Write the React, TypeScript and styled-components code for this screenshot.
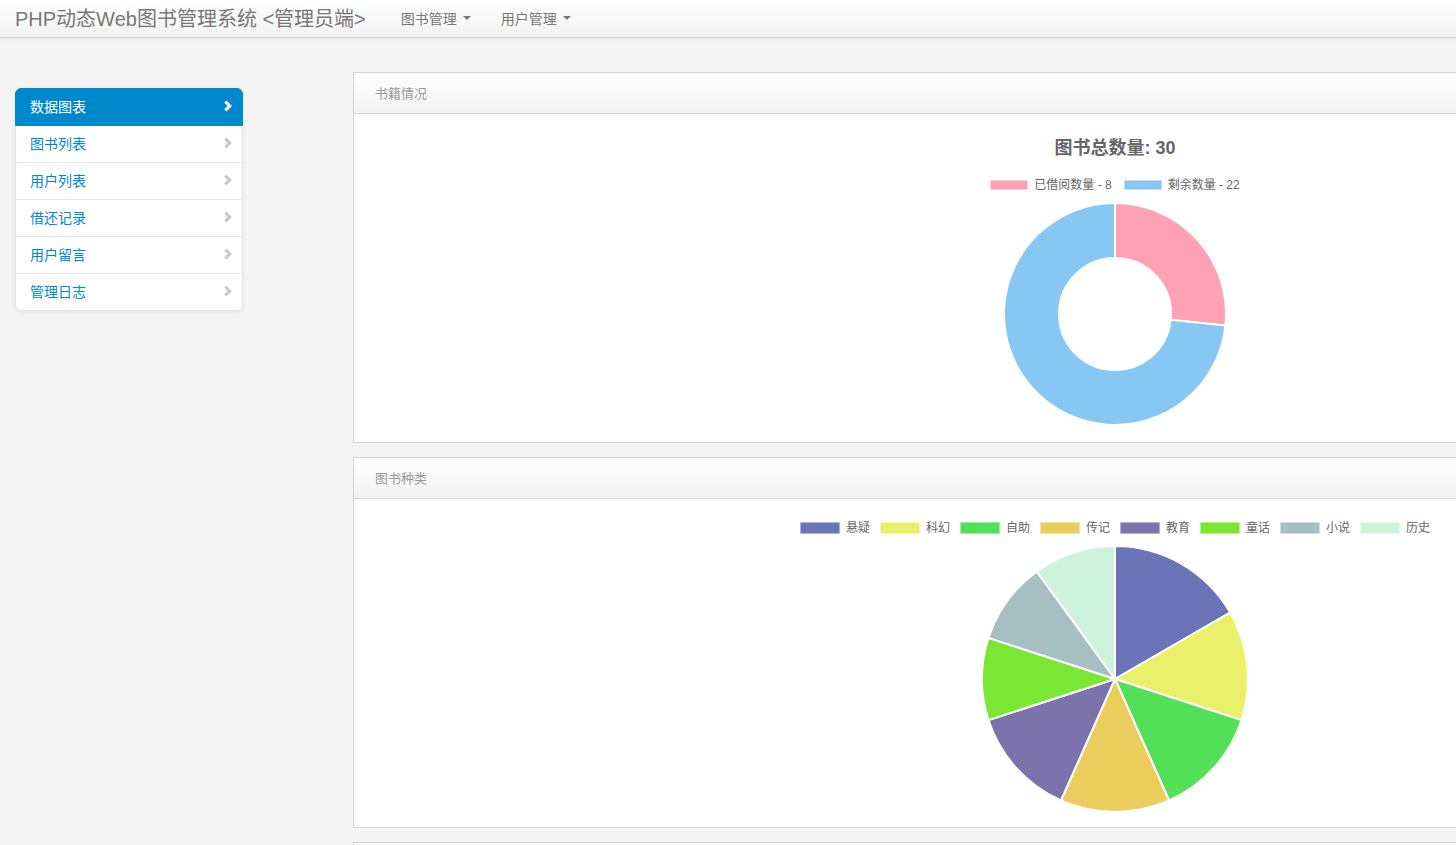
import React from 'react';
import styled, { createGlobalStyle } from 'styled-components';

const GlobalStyle = createGlobalStyle`
  html, body {
    margin: 0;
    padding: 0;
    overflow: hidden;
    background: #f4f4f4;
    font-family: "Liberation Sans", "Noto Sans CJK SC", Arial, sans-serif;
    font-size: 14px;
    color: #333;
  }
`;

const Navbar = styled.div`
  height: 35px;
  padding: 0 0 2px 15px;
  display: flex;
  align-items: center;
  background: linear-gradient(#ffffff, #f2f2f2);
  border-bottom: 1px solid #d4d4d4;
  box-shadow: 0 1px 4px rgba(0, 0, 0, 0.065);
`;

const Brand = styled.div`
  font-size: 20px;
  color: #777;
  margin-right: 20px;
  white-space: nowrap;
`;

const NavLink = styled.div`
  display: flex;
  align-items: center;
  padding: 0 15px;
  font-size: 14px;
  color: #777;
`;

const Caret = styled.span`
  display: inline-block;
  width: 0;
  height: 0;
  margin-left: 6px;
  border-top: 4px solid #777;
  border-left: 4px solid transparent;
  border-right: 4px solid transparent;
`;

const Layout = styled.div`
  display: flex;
  align-items: flex-start;
  padding-left: 15px;
`;

const SideNav = styled.ul`
  list-style: none;
  margin: 50px 0 0;
  padding: 0;
  width: 228px;
  flex-shrink: 0;
  background: #fff;
  border-radius: 6px;
  box-shadow: 0 1px 4px rgba(0, 0, 0, 0.065);
`;

const SideItem = styled.li<{ $active?: boolean }>`
  display: flex;
  align-items: center;
  justify-content: space-between;
  height: 34px;
  padding: 0 9px 2px 14px;
  margin-bottom: -1px;
  border: 1px solid ${(p) => (p.$active ? '#0088cc' : '#e5e5e5')};
  background: ${(p) => (p.$active ? '#0088cc' : '#fff')};
  color: ${(p) => (p.$active ? '#fff' : '#0088cc')};
  font-size: 14px;
  position: relative;
  z-index: ${(p) => (p.$active ? 2 : 1)};

  &:first-child {
    border-radius: 6px 6px 0 0;
  }
  &:last-child {
    border-radius: 0 0 6px 6px;
    margin-bottom: 0;
  }
`;

const Main = styled.div`
  margin: 34px 0 0 110px;
  width: 1524px;
  flex-shrink: 0;
  display: flex;
  flex-direction: column;
  gap: 14px;
`;

const Panel = styled.div`
  background: #fff;
  border: 1px solid #d4d4d4;
`;

const PanelHeader = styled.div`
  height: 38px;
  padding: 0 0 2px 21px;
  display: flex;
  align-items: center;
  font-size: 13px;
  color: #999;
  background: linear-gradient(#ffffff, #f2f2f2);
  border-bottom: 1px solid #d4d4d4;
`;

const PanelBody = styled.div<{ $top: number }>`
  height: 328px;
  box-sizing: border-box;
  padding-top: ${(p) => p.$top}px;
  display: flex;
  flex-direction: column;
  align-items: center;
`;

const ChartTitle = styled.div`
  font-size: 18px;
  line-height: 22px;
  font-weight: bold;
  color: #666;
`;

const Legend = styled.div<{ $gap: number; $mt: number }>`
  display: flex;
  gap: ${(p) => p.$gap}px;
  margin-top: ${(p) => p.$mt}px;
  height: 14px;
`;

const LegendItem = styled.div`
  display: flex;
  align-items: center;
  font-size: 12px;
  line-height: 14px;
  color: #666;
  white-space: nowrap;
`;

const Swatch = styled.span<{ $color: string; $w: number; $h: number }>`
  display: inline-block;
  box-sizing: border-box;
  width: ${(p) => p.$w}px;
  height: ${(p) => p.$h}px;
  margin-right: 6px;
  background: ${(p) => p.$color};
  border: 1px solid rgba(255, 255, 255, 0.45);
`;

const ChartSvg = styled.svg<{ $mt: number }>`
  display: block;
  margin-top: ${(p) => p.$mt}px;
`;

const Chevron = ({ color }: { color: string }) => (
  <svg width="10" height="12" viewBox="0 0 10 12">
    <path d="M2.3 1.6 L6.8 6 L2.3 10.4" fill="none" stroke={color} strokeWidth="3" />
  </svg>
);

const arcPath = (cx: number, cy: number, r: number, ri: number, a0: number, a1: number) => {
  const p = (rad: number, a: number) => `${cx + rad * Math.cos(a)} ${cy + rad * Math.sin(a)}`;
  const large = a1 - a0 > Math.PI ? 1 : 0;
  if (ri === 0) {
    return `M${cx} ${cy} L${p(r, a0)} A${r} ${r} 0 ${large} 1 ${p(r, a1)} Z`;
  }
  return `M${p(r, a0)} A${r} ${r} 0 ${large} 1 ${p(r, a1)} L${p(ri, a1)} A${ri} ${ri} 0 ${large} 0 ${p(ri, a0)} Z`;
};

type Slice = { label: string; value: number; color: string };

const PieChart = ({ data, r, ri, mt }: { data: Slice[]; r: number; ri: number; mt: number }) => {
  const total = data.reduce((s, d) => s + d.value, 0);
  const size = r * 2 + 4;
  const c = size / 2;
  let a = -Math.PI / 2;
  return (
    <ChartSvg $mt={mt} width={size} height={size} viewBox={`0 0 ${size} ${size}`}>
      {data.map((d) => {
        const a0 = a;
        const a1 = a + (d.value / total) * Math.PI * 2;
        a = a1;
        return <path key={d.label} d={arcPath(c, c, r, ri, a0, a1)} fill={d.color} stroke="#fff" strokeWidth="2" />;
      })}
    </ChartSvg>
  );
};

const books: Slice[] = [
  { label: '已借阅数量 - 8', value: 8, color: '#ffa1b5' },
  { label: '剩余数量 - 22', value: 22, color: '#87c7f3' },
];

const kinds: Slice[] = [
  { label: '悬疑', value: 5, color: '#6b74b6' },
  { label: '科幻', value: 4, color: '#ebf06a' },
  { label: '自助', value: 4, color: '#52e058' },
  { label: '传记', value: 4, color: '#eacd5c' },
  { label: '教育', value: 4, color: '#7c73ad' },
  { label: '童话', value: 3, color: '#7ae833' },
  { label: '小说', value: 3, color: '#a6bfc3' },
  { label: '历史', value: 3, color: '#cdf3dc' },
];

const menu = ['数据图表', '图书列表', '用户列表', '借还记录', '用户留言', '管理日志'];

export default function App() {
  return (
    <>
      <GlobalStyle />
      <Navbar>
        <Brand>PHP动态Web图书管理系统 &lt;管理员端&gt;</Brand>
        <NavLink>
          图书管理
          <Caret />
        </NavLink>
        <NavLink>
          用户管理
          <Caret />
        </NavLink>
      </Navbar>
      <Layout>
        <SideNav>
          {menu.map((m, i) => (
            <SideItem key={m} $active={i === 0}>
              {m}
              <Chevron color={i === 0 ? '#fff' : '#c8c8c8'} />
            </SideItem>
          ))}
        </SideNav>
        <Main>
          <Panel>
            <PanelHeader>书籍情况</PanelHeader>
            <PanelBody $top={23}>
              <ChartTitle>图书总数量: 30</ChartTitle>
              <Legend $gap={12} $mt={19}>
                {books.map((b) => (
                  <LegendItem key={b.label}>
                    <Swatch $color={b.color} $w={38} $h={10} />
                    {b.label}
                  </LegendItem>
                ))}
              </Legend>
              <PieChart data={books} r={111} ri={56} mt={9} />
            </PanelBody>
          </Panel>
          <Panel>
            <PanelHeader>图书种类</PanelHeader>
            <PanelBody $top={22}>
              <Legend $gap={10} $mt={0}>
                {kinds.map((k) => (
                  <LegendItem key={k.label}>
                    <Swatch $color={k.color} $w={40} $h={12} />
                    {k.label}
                  </LegendItem>
                ))}
              </Legend>
              <PieChart data={kinds} r={133} ri={0} mt={9} />
            </PanelBody>
          </Panel>
          <Panel>
            <PanelHeader />
            <PanelBody $top={22} />
          </Panel>
        </Main>
      </Layout>
    </>
  );
}
